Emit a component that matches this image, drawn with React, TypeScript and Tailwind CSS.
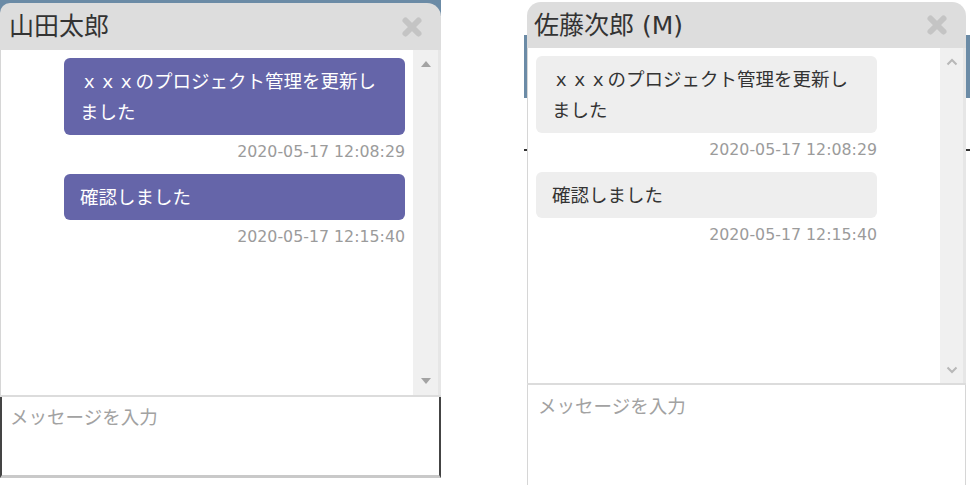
type Msg = { text: string; time: string };

const messages: Msg[] = [
  { text: 'ｘｘｘのプロジェクト管理を更新しました', time: '2020-05-17 12:08:29' },
  { text: '確認しました', time: '2020-05-17 12:15:40' },
];

const CloseIcon = () => (
  <svg width="22" height="22" viewBox="0 0 22 22">
    <path d="M4.5 4.5L17.5 17.5M17.5 4.5L4.5 17.5" stroke="#c4c4c4" strokeWidth="6" strokeLinecap="round" />
  </svg>
);

const TriUp = () => (
  <svg width="10" height="6" viewBox="0 0 10 6">
    <path d="M0 6L5 0L10 6Z" fill="#a3a3a3" />
  </svg>
);

const TriDown = () => (
  <svg width="10" height="6" viewBox="0 0 10 6">
    <path d="M0 0L5 6L10 0Z" fill="#a3a3a3" />
  </svg>
);

const ChevUp = () => (
  <svg width="12" height="8" viewBox="0 0 12 8">
    <path d="M1.5 6.5L6 2L10.5 6.5" stroke="#b8b8b8" strokeWidth="2" fill="none" />
  </svg>
);

const ChevDown = () => (
  <svg width="12" height="8" viewBox="0 0 12 8">
    <path d="M1.5 1.5L6 6L10.5 1.5" stroke="#b8b8b8" strokeWidth="2" fill="none" />
  </svg>
);

const Bubble = ({ msg, mine }: { msg: Msg; mine: boolean }) => (
  <div className={mine ? 'ml-[63px] w-[341px]' : 'ml-2 w-[341px]'}>
    <div
      className={
        mine
          ? 'rounded-[6px] bg-[#6565a9] px-4 py-[7.5px] text-[18.5px] leading-[31px] text-white'
          : 'rounded-[6px] bg-[#eeeeee] px-4 py-[7.5px] text-[18.5px] leading-[31px] text-[#333]'
      }
    >
      {msg.text}
    </div>
    <div className="mt-[7px] text-right text-[15.8px] leading-[20px] text-[#9b9b9b]">{msg.time}</div>
  </div>
);

export default function App() {
  return (
    <div className="flex h-[485px] w-[970px] overflow-hidden bg-white font-['DejaVu_Sans','Noto_Sans_CJK_JP',sans-serif]">
      {/* 山田太郎 — own messages */}
      <div className="w-[441px] pt-[3px] bg-[linear-gradient(to_bottom,#6b8ba6_16px,transparent_16px)]">
        <div className="flex h-[47px] items-center justify-between rounded-tl-[10px] rounded-tr-[14px] bg-[#dddddd] pl-[9px] pr-[18px]">
          <span className="text-[25px] leading-none text-[#333]">山田太郎</span>
          <CloseIcon />
        </div>
        <div className="flex h-[345px] border-l border-r-[3px] border-l-[#d6d6d6] border-r-[#e6e6e6]">
          <div className="flex w-[412px] flex-col gap-[12px] pt-2">
            {messages.map((m) => (
              <Bubble key={m.time} msg={m} mine />
            ))}
          </div>
          <div className="flex w-[25px] flex-col items-center justify-between bg-[#f0f0f0] pt-[11px] pb-[11px]">
            <TriUp />
            <TriDown />
          </div>
        </div>
        <div className="h-[2px] bg-[#dcdcdc]" />
        <div className="h-[81px] border-x-2 border-b-[3px] border-x-[#444] border-b-[#c9c9c9] pl-2 pt-[6px] text-[18.5px] leading-[30px] text-[#a2a2a2]">
          メッセージを入力
        </div>
      </div>

      {/* 佐藤次郎 (M) — received messages */}
      <div className="ml-[83px] w-[446px] pt-[2px] bg-[linear-gradient(to_bottom,transparent_35px,#6b8ba6_35px,#6b8ba6_98px,transparent_98px),linear-gradient(to_bottom,transparent_149px,#333_149px,#333_151px,transparent_151px)]">
        <div className="ml-[3px] flex h-[483px] w-[439px] flex-col">
          <div className="flex h-[46px] items-center justify-between rounded-t-[14px] bg-[#dddddd] pl-[7px] pr-[18px]">
            <span className="text-[25px] leading-none text-[#333]">佐藤次郎 (M)</span>
            <CloseIcon />
          </div>
          <div className="flex h-[335px] border-l border-r-[3px] border-l-[#d6d6d6] border-r-[#e6e6e6] bg-white">
            <div className="flex w-[412px] flex-col gap-[12px] pt-2">
              {messages.map((m) => (
                <Bubble key={m.time} msg={m} mine={false} />
              ))}
            </div>
            <div className="flex w-[23px] flex-col items-center justify-between bg-[#f0f0f0] pt-[10px] pb-[9px]">
              <ChevUp />
              <ChevDown />
            </div>
          </div>
          <div className="h-[2px] bg-[#dcdcdc]" />
          <div className="flex-1 border-x border-x-[#d6d6d6] bg-white pl-[10px] pt-[7px] text-[18.5px] leading-[30px] text-[#a2a2a2]">
            メッセージを入力
          </div>
        </div>
      </div>
    </div>
  );
}
